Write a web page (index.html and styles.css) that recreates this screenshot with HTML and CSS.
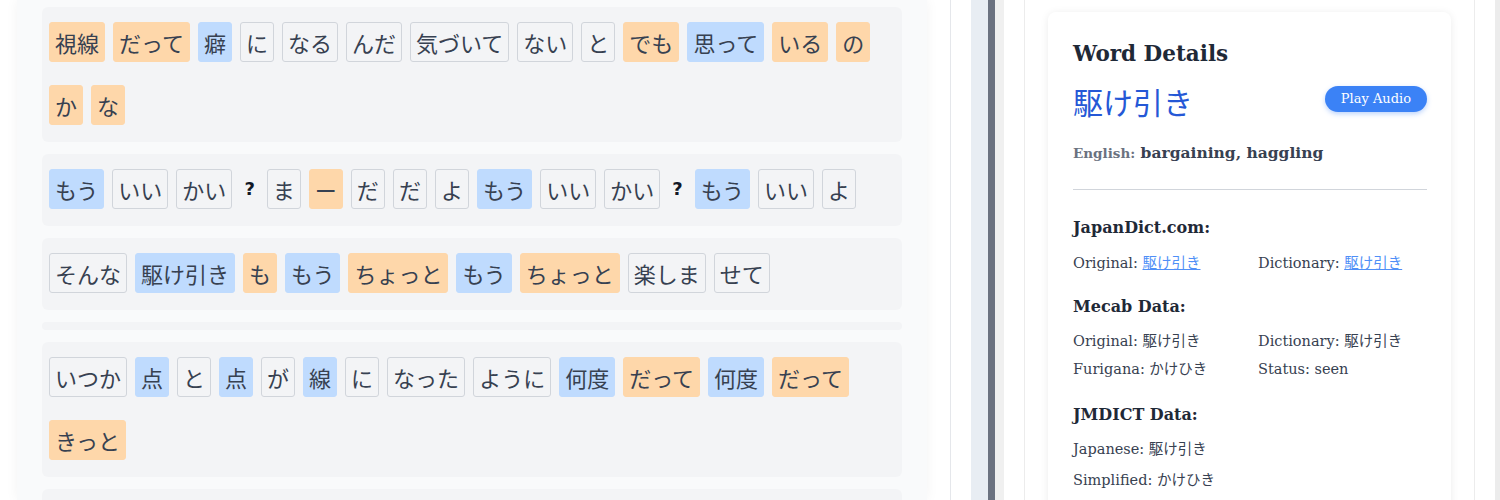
FILE: index.html
```html
<!DOCTYPE html>
<html lang="ja">
<head>
    <meta charset="UTF-8">
    <meta name="viewport" content="width=device-width, initial-scale=1.0">
    <title>Lyrics Reader</title>
    <link rel="stylesheet" href="styles.css">
</head>
<body>
    <div class="layout">
        <div class="lyrics-pane">
            <div class="lyrics-panel">
                <div class="sentence">
                    <span class="token seen">視線</span>
                    <span class="token seen">だって</span>
                    <span class="token known">癖</span>
                    <span class="token">に</span>
                    <span class="token">なる</span>
                    <span class="token">んだ</span>
                    <span class="token">気づいて</span>
                    <span class="token">ない</span>
                    <span class="token">と</span>
                    <span class="token seen">でも</span>
                    <span class="token known">思って</span>
                    <span class="token seen">いる</span>
                    <span class="token seen">の</span>
                    <span class="token seen">か</span>
                    <span class="token seen">な</span>
                </div>
                <div class="sentence">
                    <span class="token known">もう</span>
                    <span class="token">いい</span>
                    <span class="token">かい</span>
                    <span class="token punct">?</span>
                    <span class="token">ま</span>
                    <span class="token seen">ー</span>
                    <span class="token">だ</span>
                    <span class="token">だ</span>
                    <span class="token">よ</span>
                    <span class="token known">もう</span>
                    <span class="token">いい</span>
                    <span class="token">かい</span>
                    <span class="token punct">?</span>
                    <span class="token known">もう</span>
                    <span class="token">いい</span>
                    <span class="token">よ</span>
                </div>
                <div class="sentence">
                    <span class="token">そんな</span>
                    <span class="token known">駆け引き</span>
                    <span class="token seen">も</span>
                    <span class="token known">もう</span>
                    <span class="token seen">ちょっと</span>
                    <span class="token known">もう</span>
                    <span class="token seen">ちょっと</span>
                    <span class="token">楽しま</span>
                    <span class="token">せて</span>
                </div>
                <div class="sentence empty"></div>
                <div class="sentence">
                    <span class="token">いつか</span>
                    <span class="token known">点</span>
                    <span class="token">と</span>
                    <span class="token known">点</span>
                    <span class="token">が</span>
                    <span class="token known">線</span>
                    <span class="token">に</span>
                    <span class="token">なった</span>
                    <span class="token">ように</span>
                    <span class="token known">何度</span>
                    <span class="token seen">だって</span>
                    <span class="token known">何度</span>
                    <span class="token seen">だって</span>
                    <span class="token seen">きっと</span>
                </div>
                <!-- next sentence, scrolled below the fold -->
                <div class="sentence more"></div>
            </div>
        </div>

        <div class="resizer"></div>

        <div class="details-pane">
            <div class="word-card">
                <h2>Word Details</h2>
                <div class="word-head">
                    <span class="word">駆け引き</span>
                    <button class="audio-btn">Play Audio</button>
                </div>
                <p class="english"><span class="label">English:</span> bargaining, haggling</p>
                <hr>

                <h3>JapanDict.com:</h3>
                <div class="info-grid">
                    <div>Original: <a href="#">駆け引き</a></div>
                    <div>Dictionary: <a href="#">駆け引き</a></div>
                </div>

                <h3>Mecab Data:</h3>
                <div class="info-grid tight">
                    <div>Original: 駆け引き</div>
                    <div>Dictionary: 駆け引き</div>
                    <div>Furigana: かけひき</div>
                    <div>Status: seen</div>
                </div>

                <h3>JMDICT Data:</h3>
                <p class="info-line">Japanese: 駆け引き</p>
                <p class="info-line">Simplified: かけひき</p>
            </div>
        </div>
        <div class="scrollbar"></div>
    </div>
</body>
</html>
```

FILE: styles.css
```css
body {
    margin: 0;
    background: #fff;
    font-family: "DejaVu Serif", "Noto Sans CJK JP", serif;
    color: #1f2937;
    overflow: hidden;
}
.layout {
    display: flex;
    height: 500px;
    overflow: hidden;
}

/* left: lyrics */
.lyrics-pane {
    width: 910px;
    padding: 0 23px 0 17px;
    border-right: 1px solid #e5e7eb;
    flex-shrink: 0;
}
.lyrics-panel {
    background: #f9fafb;
    padding: 7px 25px;
    height: 100%;
    box-sizing: border-box;
    box-shadow: 0 0 12px rgba(0,0,0,0.05);
}
.sentence {
    display: flex;
    flex-wrap: wrap;
    gap: 23px 8px;
    align-content: flex-start;
    background: #f3f4f6;
    border-radius: 6px;
    padding: 15px 7px 17px;
    margin-bottom: 12px;
}
.sentence.empty {
    padding: 4px 7px;
}
.sentence.more {
    height: 60px;
}
.token {
    font-family: "Noto Sans CJK JP", sans-serif;
    font-size: 22px;
    line-height: 38px;
    padding: 0 5px;
    border: 1px solid #d1d5db;
    border-radius: 3px;
    background: #f3f4f6;
    color: #374151;
}
.token.seen {
    background: #fed7aa;
    border-color: #fed7aa;
}
.token.known {
    background: #bfdbfe;
    border-color: #bfdbfe;
}
.token.punct {
    background: transparent;
    border-color: transparent;
    font-family: "DejaVu Sans", sans-serif;
    font-weight: bold;
    font-size: 18px;
    padding: 0 3px;
    color: #111827;
}

/* resize handle */
.resizer {
    width: 7px;
    margin-left: 20px;
    background: #6b7280;
    border-left: 17px solid #e8edf3;
    border-right: 9px solid #f0f0f0;
    flex-shrink: 0;
}

/* right: details */
.details-pane {
    width: 403px;
    margin-left: 20px;
    padding: 12px 23px;
    border-left: 1px solid #ececec;
    border-right: 1px solid #ececec;
    flex-shrink: 0;
}
.word-card {
    background: #fff;
    border-radius: 8px;
    box-shadow: 0 1px 8px rgba(0,0,0,0.08);
    padding: 26px 24px 30px 25px;
}
.word-card h2 {
    margin: 0;
    font-size: 21.5px;
    line-height: 32px;
    color: #1f2937;
}
.word-head {
    display: flex;
    justify-content: space-between;
    align-items: center;
    margin-top: 13px;
}
.word {
    font-family: "Noto Sans CJK JP", sans-serif;
    font-size: 30px;
    line-height: 36px;
    color: #2558d6;
}
.audio-btn {
    font-family: "DejaVu Serif", serif;
    font-size: 13px;
    color: #fff;
    background: #3b82f6;
    border: none;
    border-radius: 14px;
    padding: 5px 16px 6px;
    margin-top: -4px;
    box-shadow: 0 2px 5px rgba(59,130,246,0.35);
}
.english {
    margin: 24px 0 0;
    font-size: 15.5px;
    font-weight: bold;
    color: #374151;
}
.english .label {
    font-size: 13.5px;
    color: #6b7280;
}
hr {
    border: none;
    border-top: 1px solid #d1d5db;
    margin: 27px 0 0;
}
.word-card h3 {
    margin: 20px 0 0;
    font-size: 16px;
    line-height: 24px;
    color: #1f2937;
}
.word-card hr + h3 {
    margin-top: 26px;
}
.info-grid {
    display: grid;
    grid-template-columns: 185px 1fr;
    margin-top: 11px;
    font-size: 14.5px;
    line-height: 24px;
    color: #374151;
}
.info-grid.tight {
    margin-top: 8px;
    line-height: 28px;
}
.info-grid a {
    color: #4f8ff7;
}
.info-line {
    margin: 7px 0 0;
    font-size: 14.5px;
    line-height: 24px;
    color: #374151;
}
h3 + .info-line {
    margin-top: 10px;
}
.scrollbar {
    margin-left: 20px;
    width: 5px;
    background: #ececec;
}
```
